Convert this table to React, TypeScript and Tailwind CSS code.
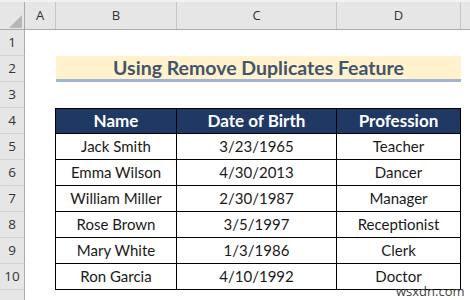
import React from "react";

const rows = [
  ["Jack Smith", "3/23/1965", "Teacher"],
  ["Emma Wilson", "4/30/2013", "Dancer"],
  ["William Miller", "2/30/1987", "Manager"],
  ["Rose Brown", "3/5/1997", "Receptionist"],
  ["Mary White", "1/3/1986", "Clerk"],
  ["Ron Garcia", "4/10/1992", "Doctor"],
];

const cal = { fontFamily: "Lato, 'Open Sans', sans-serif" };
const ui = { fontFamily: "'Open Sans', 'Noto Sans', sans-serif" };

function RowNum({ n }: { n?: number }) {
  return (
    <div
      className="w-[25px] h-full shrink-0 bg-[#e6e6e6] border-r border-r-[#ababab] border-b border-b-[#d0d0d0] flex items-center justify-center text-[13.5px] text-[#333]"
      style={ui}
    >
      {n}
    </div>
  );
}

export default function App() {
  return (
    <div className="relative w-[470px] h-[300px] overflow-hidden bg-white">
      {/* Column header */}
      <div className="flex h-[30px] bg-[#e6e6e6] border-t-2 border-t-[#f2f2f2] border-b border-b-[#ababab] text-[13px] text-[#333]" style={ui}>
        <div className="w-[25px] shrink-0 border-r border-r-[#ababab] relative">
          <svg className="absolute left-[9px] top-[13px]" width="13" height="13" viewBox="0 0 13 13">
            <polygon points="13,0 13,13 0,13" fill="#b7b7b7" />
          </svg>
        </div>
        <div className="w-[31px] shrink-0 border-r border-r-[#c6c6c6] flex items-center justify-center">A</div>
        <div className="w-[121px] shrink-0 border-r border-r-[#c6c6c6] flex items-center justify-center">B</div>
        <div className="w-[160px] shrink-0 border-r border-r-[#c6c6c6] flex items-center justify-center">C</div>
        <div className="w-[124px] shrink-0 border-r border-r-[#c6c6c6] flex items-center justify-center">D</div>
        <div className="flex-1" />
      </div>

      {/* Row 1 */}
      <div className="flex h-[26px]">
        <RowNum n={1} />
      </div>

      {/* Row 2 title */}
      <div className="flex h-[26px]">
        <RowNum n={2} />
        <div className="w-[31px] shrink-0" />
        <div
          className="w-[405px] shrink-0 h-full bg-[#fff2cc] border-b-[3px] border-b-[#9fb4d6] flex items-center justify-center text-[19.5px] font-bold text-[#44546a]"
          style={cal}
        >
          Using Remove Duplicates Feature
        </div>
      </div>

      {/* Row 3 */}
      <div className="flex h-[26px]">
        <RowNum n={3} />
      </div>

      {/* Row 4 header */}
      <div className="flex h-[26px]">
        <RowNum n={4} />
        <div className="w-[30px] shrink-0" />
        <div className="flex bg-[#203864] text-white text-[17px] font-bold border border-black" style={cal}>
          <div className="w-[121px] border-r border-r-black flex items-center justify-center">Name</div>
          <div className="w-[160px] border-r border-r-black flex items-center justify-center">Date of Birth</div>
          <div className="w-[123px] flex items-center justify-center">Profession</div>
        </div>
      </div>

      {rows.map((r, i) => (
        <div key={i} className="flex h-[26px]">
          <RowNum n={i + 5} />
          <div className="w-[30px] shrink-0" />
          <div className="flex border-l border-r border-b border-black text-[15px] text-[#1a1a1a]" style={cal}>
            <div className="w-[121px] border-r border-r-black flex items-center justify-center">{r[0]}</div>
            <div className="w-[160px] border-r border-r-black flex items-center justify-center">{r[1]}</div>
            <div className="w-[123px] flex items-center justify-center">{r[2]}</div>
          </div>
        </div>
      ))}

      {/* Row 11 partial */}
      <div className="flex h-[26px]">
        <RowNum />
      </div>

      <div
        className="absolute left-[396px] top-[285px] text-[13px] leading-none text-[#444]"
        style={ui}
      >
        wsxdn.com
      </div>
    </div>
  );
}
